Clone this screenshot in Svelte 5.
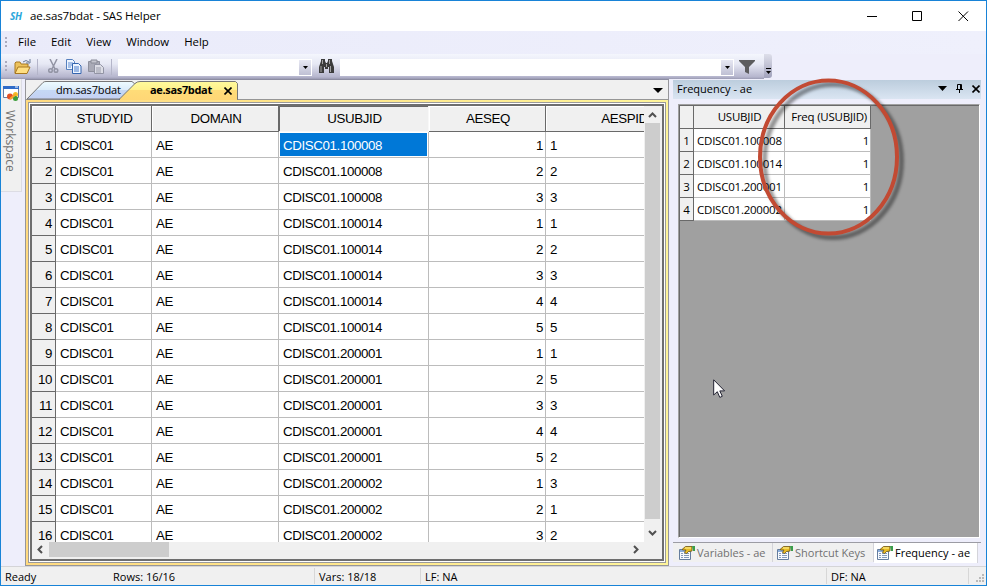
<script>
  const cols = ['STUDYID', 'DOMAIN', 'USUBJID', 'AESEQ', 'AESPID'];
  const ids = ['100008', '100008', '100008', '100014', '100014', '100014', '100014', '100014', '200001', '200001', '200001', '200001', '200001', '200002', '200002', '200002'];
  const seq = [1, 2, 3, 1, 2, 3, 4, 5, 1, 2, 3, 4, 5, 1, 2, 3];
  const spid = [1, 2, 3, 1, 2, 3, 4, 5, 1, 5, 3, 4, 2, 3, 1, 2];
  const freq = ['100008', '100014', '200001', '200002'];
  const menus = ['File', 'Edit', 'View', 'Window', 'Help'];
  const tabs = ['Variables - ae', 'Shortcut Keys', 'Frequency - ae'];
</script>

{#snippet down(w, h)}
  <svg width={w} height={h} viewBox="0 0 10 5" preserveAspectRatio="none"><path d="M0 0H10L5 5Z" fill="#000" /></svg>
{/snippet}

{#snippet propIcon()}
  <svg class="prop" width="16" height="14" viewBox="0 0 16 14">
    <path d="M.5 3.5h11v10H.5z" fill="#f7faff" stroke="#647d9e" />
    <path d="M1 4h10v2H1z" fill="#8aaddb" />
    <path d="M2 7.5h2M2 9.5h2M2 11.5h2M5 7.5h5M5 9.5h5M5 11.5h5" stroke="#839ab9" />
    <path d="M3 3.500l3.500-3h6.500v4.500l-3.500.5-2 2-2-1 1.500-2.500H4z" fill="#e9bd25" stroke="#6d5312" stroke-width=".8" />
    <path d="M6 2h6" stroke="#fff49b" /><path d="M13 0h3v5h-2z" fill="#3b9d4b" />
  </svg>
{/snippet}

<div class="window">
  <header class="title">
    <span class="logo">SH</span><span class="caption">ae.sas7bdat - SAS Helper</span>
    <svg class="winbtns" width="104" height="12" viewBox="0 0 104 12" fill="none" stroke="#000">
      <path d="M0 6.500h10M45.500 1.500h9v9h-9zM91.500 1.500l9.500 9.500M101 1.500l-9.500 9.500" />
    </svg>
  </header>

  <nav class="menu">
    <i class="grip"></i>
    {#each menus as m}<span>{m}</span>{/each}
  </nav>

  <div class="toolrow">
    <div class="toolbar">
      <i class="grip"></i>
      <svg class="open" width="18" height="16" viewBox="0 0 18 16">
        <path d="M1 14V4l1-1h4l1 2h7v3" fill="#edc25c" stroke="#a87820" />
        <path d="M1 14.500L4 8h12l-3 6.500z" fill="#ffdf83" stroke="#a87820" />
        <path d="M9 3q3-3 6 0M16 0v4h-4" fill="none" stroke="#6a7a96" />
      </svg>
      <i class="sep"></i>
      <svg class="cut" width="11" height="15" viewBox="0 0 11 15" fill="none" stroke="#9294a4" stroke-width="1.500">
        <path d="M2 0l5 10M9 0L4 10" /><circle cx="2.500" cy="11.500" r="1.800" /><circle cx="8" cy="11.500" r="1.800" />
      </svg>
      <svg class="copy" width="16" height="15" viewBox="0 0 16 15">
        <path d="M.5.5h6l2 2v8h-8z" fill="#eef5ff" stroke="#5680be" /><path d="M2 4h5M2 6h5M2 8h3" stroke="#5e8dd4" />
        <path d="M6.500 4.500h6l2.500 2.500v7.500H6.500z" fill="#eef5ff" stroke="#3465af" /><path d="M8 8h5M8 10h5M8 12h5" stroke="#4b7dcb" />
      </svg>
      <svg class="paste" width="16" height="15" viewBox="0 0 16 15">
        <path d="M.5 2.500h11v10H.5z" fill="#a9aab6" stroke="#8e909d" /><path d="M3 1h6v3H3z" fill="#c5c6cf" stroke="#8a8c98" />
        <path d="M6.500 5.500h6l3 3v6h-9z" fill="#dcdde5" stroke="#9294a4" /><path d="M8 9h5M8 11h5M8 13h5" stroke="#9b9dac" />
      </svg>
      <i class="sep two"></i>
      <div class="combo first"><b>{@render down(5, 3)}</b></div>
      <svg class="bino" width="15" height="15" viewBox="0 0 15 15">
        <path d="M2 2V0h4v2l1 2h1l1-2V0h4v2l2 6v6h-5V8H9v2H6V8H5v6H0V8z" fill="#3c3c3c" />
        <path d="M3.500 1v4M10.500 1v4M2 7v6M11.500 7v6M7.500 5v3" stroke="#a3a3a3" />
      </svg>
      <div class="combo second"><b>{@render down(5, 3)}</b></div>
      <svg class="filter" width="16" height="14" viewBox="0 0 16 14"><path d="M0 0h16v1l-6 6v7l-4-2V7L0 1z" fill="#5c5c5e" /></svg>
    </div>
    <div class="overflow"><i></i>{@render down(5, 3)}</div>
  </div>

  <main>
    <aside class="dock">
      <div class="docktab">
        <svg width="17" height="17" viewBox="0 0 17 17">
          <path d="M.5 1.500h15v11H.5z" fill="#fff" stroke="#6a7da5" /><path d="M0 1h16v3H0z" fill="#2f6bc8" />
          <path d="M12 2h3" stroke="#fff" /><circle cx="7" cy="11.500" r="3" fill="#e45125" /><circle cx="12.500" cy="9.500" r="2.500" fill="#f6bf28" /><circle cx="12.500" cy="13.500" r="2.500" fill="#3d9e3b" /><path d="M7 14l6-5" stroke="#f5a62d" stroke-width="2" />
        </svg>
        <span>Workspace</span>
      </div>
    </aside>

    <section class="doc">
      <div class="doctabs">
        <svg class="tabshape" width="215" height="20" viewBox="0 0 215 20">
          <defs>
            <linearGradient id="tb" x2="0" y2="1"><stop stop-color="#eefcff" /><stop offset=".48" stop-color="#dcecfa" /><stop offset=".5" stop-color="#c5d8f5" /><stop offset="1" stop-color="#c4d0f3" /></linearGradient>
            <linearGradient id="ty" x2="0" y2="1"><stop stop-color="#fffb9c" /><stop offset=".48" stop-color="#fff08c" /><stop offset=".5" stop-color="#ffdc78" /><stop offset="1" stop-color="#ffd776" /></linearGradient>
          </defs>
          <path d="M1 19L17 2.500Q18 1.500 20 1.500H106L110 5V19Z" fill="url(#tb)" stroke="#777" />
          <path d="M93 19.500L109 3.500Q111 1.500 114 1.500H209.500L211.500 3.500V19.500Z" fill="url(#ty)" stroke="#777" />
          <path d="M94 19.500H211" stroke="#ffd776" stroke-width="1.200" />
        </svg>
        <div class="tabtext"><span class="t1">dm.sas7bdat</span><strong>ae.sas7bdat</strong>
          <svg width="8" height="8" viewBox="0 0 8 8"><path d="M.5.5l7 7M7.500.5l-7 7" stroke="#000" stroke-width="1.600" /></svg>
        </div>
        <span class="arr">{@render down(10, 5)}</span>
      </div>
      <div class="yellow">
        <div class="frame">
          <div class="gridwrap">
            <div class="grid">
              <div class="row head"><span></span>{#each cols as c, i}<span class:active={i === 2}>{c}</span>{/each}</div>
              {#each ids as id, i}
                <div class="row">
                  <span class="num">{i + 1}</span><span>CDISC01</span><span>AE</span>
                  <span class:sel={i === 0}><em>CDISC01.{id}</em></span><span class="right">{seq[i]}</span><span>{spid[i]}</span>
                </div>
              {/each}
            </div>
            <div class="vbar">
              <svg width="9" height="6" viewBox="0 0 9 6"><path d="M1 5l3.500-3.500L8 5" /></svg>
              <i></i>
              <svg width="9" height="6" viewBox="0 0 9 6"><path d="M1 1l3.500 3.500L8 1" /></svg>
            </div>
          </div>
          <div class="hbar">
            <svg width="6" height="9" viewBox="0 0 6 9"><path d="M5 1L1.500 4.500L5 8" /></svg>
            <i></i>
            <svg width="6" height="9" viewBox="0 0 6 9"><path d="M1 1l3.500 3.500L1 8" /></svg>
          </div>
        </div>
      </div>
    </section>

    <section class="pane">
      <div class="panehead">
        <span>Frequency - ae</span>
        {@render down(9, 5)}
        <svg class="pin" width="7" height="9" viewBox="0 0 7 9"><path d="M1.500 5V.5h4V5M0 5.500h7M3.500 6v3" fill="none" stroke="#000" /><path d="M4 1h1.500v4H4z" /></svg>
        <svg class="x" width="8" height="8" viewBox="0 0 8 8"><path d="M.5.5l7 7M7.500.5l-7 7" stroke="#000" stroke-width="1.600" /></svg>
      </div>
      <div class="panebody">
        <div class="frow fhead"><span></span><span>USUBJID</span><span>Freq (USUBJID)</span></div>
        {#each freq as f, i}
          <div class="frow"><span>{i + 1}</span><span>CDISC01.{f}</span><span>1</span></div>
        {/each}
      </div>
      <div class="panetabs">
        {#each tabs as t, i}<div class="ptab p{i}">{@render propIcon()}<span>{t}</span></div>{/each}
      </div>
    </section>
  </main>

  <footer>
    <span class="s0">Ready</span><span class="s1">Rows: 16/16</span><span class="s2">Vars: 18/18</span><span class="s3">LF: NA</span><span class="s4">DF: NA</span>
    <svg width="10" height="10" viewBox="0 0 10 10" fill="#b9b9b9"><path d="M6 0h2v2H6zM3 3h2v2H3zM6 3h2v2H6zM0 6h2v2H0zM3 6h2v2H3zM6 6h2v2H6z" /></svg>
  </footer>

  <svg class="callout" width="170" height="190" viewBox="0 0 170 190">
    <defs><filter id="soft" x="-20%" y="-20%" width="140%" height="140%"><feGaussianBlur stdDeviation="1.800" /></filter></defs>
    <ellipse cx="83" cy="91" rx="68.500" ry="76.500" fill="none" stroke="#000" stroke-opacity=".4" stroke-width="5" filter="url(#soft)" />
    <ellipse cx="78.500" cy="87" rx="68.500" ry="76.500" fill="none" stroke="#c24a33" stroke-width="4" />
  </svg>
  <svg class="cursor" width="13" height="20" viewBox="0 0 13 20"><path d="M.7.8V16l3.600-3.300 2.500 5.700 2.500-1.100-2.500-5.400h4.800z" fill="#fff" stroke="#222232" /></svg>
</div>

<style>
  :global(body) { margin: 0; overflow: hidden; }
  .window { box-sizing: border-box; position: relative; width: 987px; height: 586px; border: 1px solid #1883d7; background: #eeeefb; display: flex; flex-direction: column; font: 11px/16px "Open Sans", "Noto Sans", sans-serif; color: #000; overflow: hidden; white-space: nowrap; }
  .window *, .window *::before { box-sizing: border-box; }
  svg { display: block; flex: none; }
  .title { height: 30px; flex: none; background: #fff; display: flex; align-items: center; }
  .logo { width: 29px; padding-left: 9px; font: italic bold 10px "Open Sans", sans-serif; color: #2ba7dc; letter-spacing: -.2px; }
  .caption { font-size: 11.500px; letter-spacing: -.1px; }
  .winbtns { margin: 0 15px 0 auto; }
  .menu { height: 23px; flex: none; display: flex; align-items: center; gap: 15px; padding-bottom: 1px; background: linear-gradient(90deg, #eaebfa, #eff0fc); font-size: 11.400px; }
  .menu .grip { margin-right: -4px; }
  .grip { display: block; width: 2px; height: 11px; margin-left: 4px; background: repeating-linear-gradient(#aaaabd 0 2px, transparent 2px 4px); flex: none; }
  .toolrow { height: 25px; flex: none; display: flex; }
  .toolbar { width: 763px; background: linear-gradient(#f4f6fd, #e6e8f4 40%, #b5b5cd 92%, #9a9ab2); display: flex; align-items: center; }
  .open { margin-left: 7px; }
  .sep { width: 1px; height: 16px; margin-left: 5px; background: #b4b5c9; }
  .cut { margin-left: 10px; } .copy { margin-left: 7px; } .paste { margin-left: 6px; } .two { margin-left: 7px; }
  .combo { background: #fff; height: 17px; display: flex; justify-content: flex-end; flex: none; margin-top: 2px; }
  .combo b { width: 12px; height: 15px; margin: 1px; background: linear-gradient(#e7e8f3, #bfc0d4); display: grid; place-items: center; }
  .first { width: 194px; margin-left: 6px; } .bino { margin-left: 7px; } .second { width: 394px; margin-left: 6px; } .filter { margin-left: 5px; }
  .overflow { width: 8px; height: 24px; background: linear-gradient(#dedfea, #a1a2bc); border-radius: 0 3px 3px 0; display: flex; flex-direction: column; align-items: center; justify-content: flex-end; padding-bottom: 4px; gap: 2px; }
  .overflow i { width: 5px; height: 1px; background: #000; }
  main { flex: none; height: 487px; display: flex; }
  .dock { width: 24px; flex: none; }
  .docktab { width: 21px; height: 113px; background: #f0f0f0; border: solid #dcdce4; border-width: 0 1px 1px 0; padding: 6px 0 0 2px; }
  .docktab span { display: block; writing-mode: vertical-rl; margin: 8px 0 0 -1px; color: #727272; font-size: 12px; line-height: 16px; }
  .doc { width: 644px; flex: none; display: flex; flex-direction: column; border: 1px solid #96969a; border-top-color: #8d8da2; background: #f0f0f0; }
  .doctabs { height: 20px; display: flex; position: relative; border-bottom: 1px solid #969696; flex: none; }
  .tabshape { position: absolute; left: 0; top: 0; }
  .tabtext { position: relative; display: flex; align-items: center; width: 220px; padding-left: 30px; }
  .t1 { width: 94px; letter-spacing: -.12px; } .tabtext strong { font-size: 11px; width: 74px; letter-spacing: -.33px; } .tabtext svg { margin-top: 3px; }
  .arr { margin: 8px 5px 0 auto; }
  .yellow { flex: 1; min-height: 0; border: 2px solid #ffe682; border-image: linear-gradient(90deg, #ffda80, #fff59a) 2; }
  .frame { height: 100%; border: 1px solid #9a9a9a; outline: 1px solid #fff; outline-offset: -2px; padding: 3px; display: flex; flex-direction: column; background: #f0f0f0; box-shadow: inset 0 0 0 3px #6e6e6e; }
  .gridwrap { height: 436px; display: flex; flex: none; }
  .grid { width: 612px; height: 436px; overflow: hidden; background: #fff; flex: none; font: 13.300px "Liberation Sans", Arial, sans-serif; letter-spacing: -.37px; }
  .row { display: grid; grid-template-columns: 24px 96px 127px 150px 117px 156px; grid-template-rows: 26px; height: 26px; }
  .row > span { border: solid #bcbcbc; border-width: 0 1px 1px 0; line-height: 23px; padding: 2px 0 0 4px; }
  .row > .num, .head > span:first-child { background: #f0f0f0; border-color: #696969; text-align: right; padding: 2px 3px 0 0; }
  .row.head > span { background: #f0f0f0; border-color: #696969; text-align: center; padding: 1px 0 0 2px; box-shadow: inset 1px 1px #fff; line-height: 24px; }
  .row.head > .active { box-shadow: inset 1px 1px #696969; border-color: #f8f8f8; }
  .row > .right { text-align: right; padding: 2px 2px 0 0; }
  em { font-style: normal; display: block; }
  .row > .sel { padding: 1px; }
  .sel em { background: #0078d7; color: #fff; height: 23px; line-height: 25px; padding-left: 3px; }
  .vbar { width: 17px; display: flex; flex-direction: column; align-items: center; background: #f0f0f0; }
  .vbar i { width: 15px; flex: 1; margin: 5px 0 11px; background: #cdcdcd; }
  .vbar svg:first-child { margin-top: 6px; } .vbar svg:last-child { margin-bottom: 6px; }
  .vbar path, .hbar path { stroke: #505050; stroke-width: 2; fill: none; }
  .hbar { height: 15px; display: flex; align-items: center; padding: 0 23px 0 5px; background: #f0f0f0; }
  .hbar i { width: 120px; height: 15px; background: #cdcdcd; margin: 0 auto 0 6px; }
  .pane { margin-left: 4px; width: 308px; flex: none; display: flex; flex-direction: column; }
  .panehead { height: 19px; margin-top: 1px; background: linear-gradient(#bccddd, #dae5f2); display: flex; align-items: center; padding: 0 1px 2px 4px; }
  .panehead span { margin-right: auto; }
  .pin { margin: 0 9px; } .x { margin-right: 0; }
  .panebody { margin: 5px 0 0 5px; height: 434px; width: 302px; background: #a0a0a0; border: 1px solid #a0a0a0; border-right-color: #fff; border-bottom-color: #fff; box-shadow: inset 1px 1px #696969; padding: 1px 0 0 1px; }
  .frow { display: grid; grid-template-columns: 14px 91px 86px; grid-template-rows: 23px; height: 23px; width: 191px; }
  .frow > span { background: #fff; border: solid #bcbcbc; border-width: 0 1px 1px 0; line-height: 21px; padding: 1px 0 0 3px; font-size: 11.500px; letter-spacing: -.23px; }
  .frow > span:first-child, .frow.fhead > span { background: #f0f0f0; border-color: #696969; text-align: center; padding: 1px 0 0; }
  .frow.fhead > span { padding: 0 0 0 1px; line-height: 22px; }
  .frow > span:last-child { text-align: right; padding-right: 1px; }
  .frow.fhead > span:last-child { padding-right: 3px; }
  .panetabs { margin-top: 4px; height: 21px; border-top: 1px solid #9c9ca4; display: flex; }
  .ptab { display: flex; align-items: center; padding-left: 6px; background: #f0f0f0; border-right: 1px solid #d4d4da; color: #707070; gap: 2px; height: 19px; }
  .p0 { width: 100px; } .p1 { width: 101px; padding-left: 4px; } .p2 { width: 104px; padding-left: 3px; background: #fff; color: #000; height: 20px; }
  footer { flex: 1; border-top: 1px solid #d4d4d7; background: #f0f0f0; display: flex; align-items: center; }
  footer span { border-right: 1px solid #d7d7d7; height: 16px; padding-left: 4px; line-height: 17px; }
  .s0 { width: 108px; border: 0 !important; } .s1 { width: 206px; } .s2 { width: 106px; } .s3 { width: 406px; } .s4 { width: 142px; }
  footer svg { margin: 5px 0 0 7px; }
  .callout { position: absolute; left: 749px; top: 69px; }
  .cursor { position: absolute; left: 712px; top: 378px; }
</style>
